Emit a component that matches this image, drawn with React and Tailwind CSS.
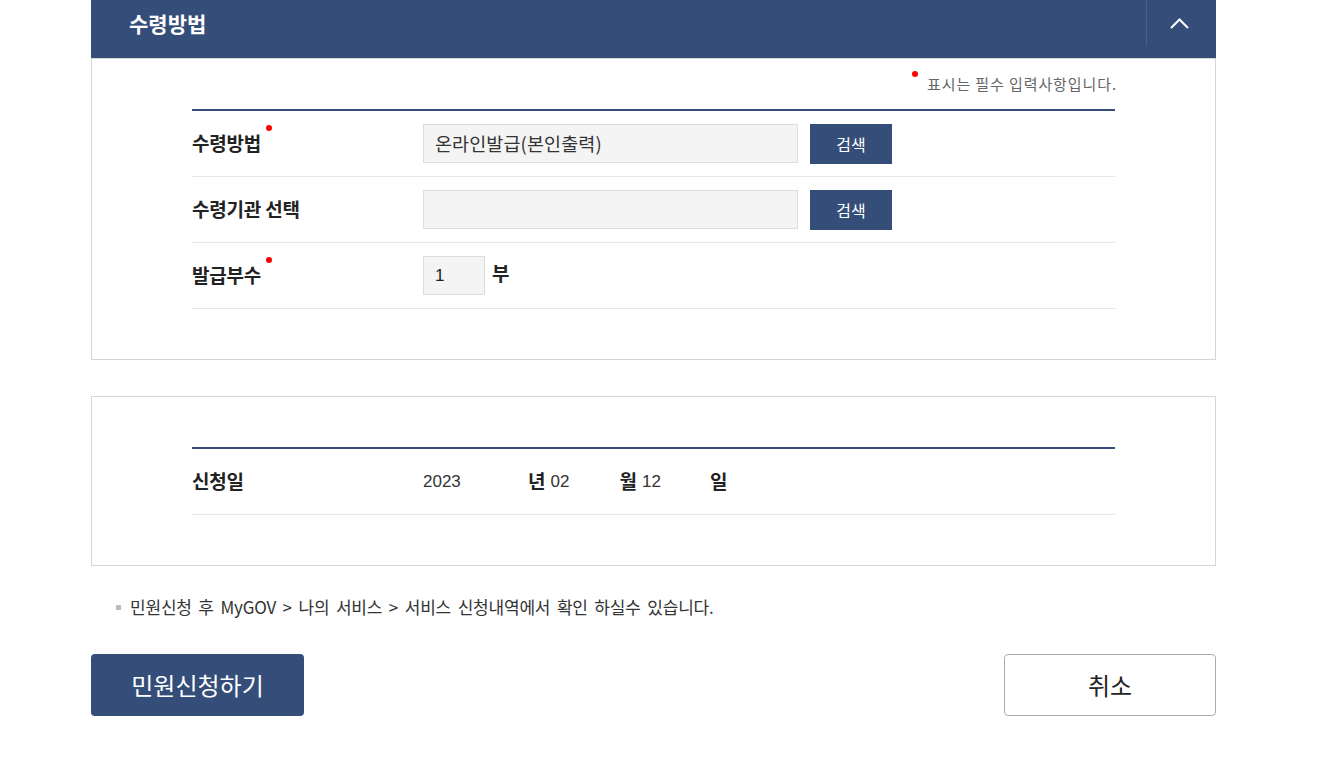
import React from "react";

const KR = { fontFamily: '"Noto Sans CJK KR", "Liberation Sans", sans-serif' };
const NUM = { fontFamily: '"Liberation Sans", "Noto Sans CJK KR", sans-serif' };

function Req() {
  return <span className="absolute -right-[11px] top-[-6px] w-[6px] h-[6px] rounded-full bg-[#ff0000]" />;
}

function Label({ children, req }) {
  return (
    <div className="w-[231px] shrink-0">
      <span className="relative inline-block text-[19px] leading-[24px] font-bold text-[#222] tracking-[-0.2px]">
        {children}
        {req && <Req />}
      </span>
    </div>
  );
}

function Row({ children, label, req }) {
  return (
    <div className="flex items-center h-[66px] border-b border-[#e8e8e8]">
      <Label req={req}>{label}</Label>
      {children}
    </div>
  );
}

function SearchBtn() {
  return (
    <button className="ml-[12px] w-[82px] h-[40px] bg-[#344d79] text-white text-[16px] leading-none">
      검색
    </button>
  );
}

export default function App() {
  return (
    <div className="bg-white min-h-[765px] w-[1329px]" style={KR}>
      <div className="ml-[91px] w-[1125px]">
        {/* header */}
        <div className="flex h-[58px] bg-[#344d79]">
          <div className="flex-1 pl-[38px] h-[46px] flex items-center">
            <span className="text-white text-[21px] font-bold leading-none">수령방법</span>
          </div>
          <div className="w-px h-[46px] bg-[#4b6089]" />
          <div className="w-[69px] h-[46px] flex items-center justify-center pr-[4px]">
            <svg width="19" height="11" viewBox="0 0 19 11">
              <polyline points="1,10 9.5,1.5 18,10" fill="none" stroke="white" strokeWidth="2" />
            </svg>
          </div>
        </div>

        {/* panel 1 */}
        <div className="border border-[#d5d5d5] px-[100px] pt-[15px] pb-[50px]">
          <div className="flex justify-end h-[20px] items-center">
            <span className="relative mr-[-2px] text-[15px] leading-[20px] text-[#666] tracking-[0.9px]">
              <span className="absolute -left-[15px] top-[-3px] w-[6px] h-[6px] rounded-full bg-[#ff0000]" />
              표시는 필수 입력사항입니다.
            </span>
          </div>
          <div className="mt-[15px] border-t-2 border-[#344d79]">
            <Row label="수령방법" req>
              <div className="w-[375px] h-[39px] bg-[#f4f4f4] border border-[#dddddd] flex items-center pl-[11px] text-[18.5px] text-[#333] tracking-[0.1px]">
                온라인발급(본인출력)
              </div>
              <SearchBtn />
            </Row>
            <Row label="수령기관 선택">
              <div className="w-[375px] h-[39px] bg-[#f4f4f4] border border-[#dddddd]" />
              <SearchBtn />
            </Row>
            <Row label="발급부수" req>
              <div className="w-[62px] h-[39px] bg-[#f4f4f4] border border-[#dddddd] flex items-center pl-[11px] text-[17px] text-[#222]" style={NUM}>
                1
              </div>
              <span className="ml-[7px] self-start mt-[18px] text-[19px] leading-[24px] font-bold text-[#222]">부</span>
            </Row>
          </div>
        </div>

        {/* panel 2 */}
        <div className="mt-[36px] border border-[#d5d5d5] px-[100px] pt-[50px] pb-[50px]">
          <div className="border-t-2 border-[#344d79]">
            <Row label="신청일">
              <div className="flex items-center text-[17px] text-[#333]">
                <span className="w-[105px]" style={NUM}>2023</span>
                <span className="font-bold text-[19px] text-[#222]">년</span>
                <span className="ml-[5px] w-[69px]" style={NUM}>02</span>
                <span className="font-bold text-[19px] text-[#222]">월</span>
                <span className="ml-[5px] w-[68px]" style={NUM}>12</span>
                <span className="font-bold text-[19px] text-[#222]">일</span>
              </div>
            </Row>
          </div>
        </div>

        {/* notice */}
        <div className="mt-[29px] flex items-center pl-[25px] h-[24px]">
          <span className="w-[5px] h-[5px] bg-[#bbbbbb]" />
          <span className="ml-[9px] text-[17px] leading-[24px] text-[#333] tracking-[-0.2px] [word-spacing:3px]">
            민원신청 후 MyGOV &gt; 나의 서비스 &gt; 서비스 신청내역에서 확인 하실수 있습니다.
          </span>
        </div>

        {/* buttons */}
        <div className="mt-[35px] flex justify-between">
          <button className="w-[213px] h-[62px] rounded-[4px] bg-[#344d79] text-white text-[24px] leading-none">
            민원신청하기
          </button>
          <button className="w-[212px] h-[62px] rounded-[4px] border border-[#aaaaaa] bg-white text-[#222] text-[24px] leading-none">
            취소
          </button>
        </div>
      </div>
    </div>
  );
}
